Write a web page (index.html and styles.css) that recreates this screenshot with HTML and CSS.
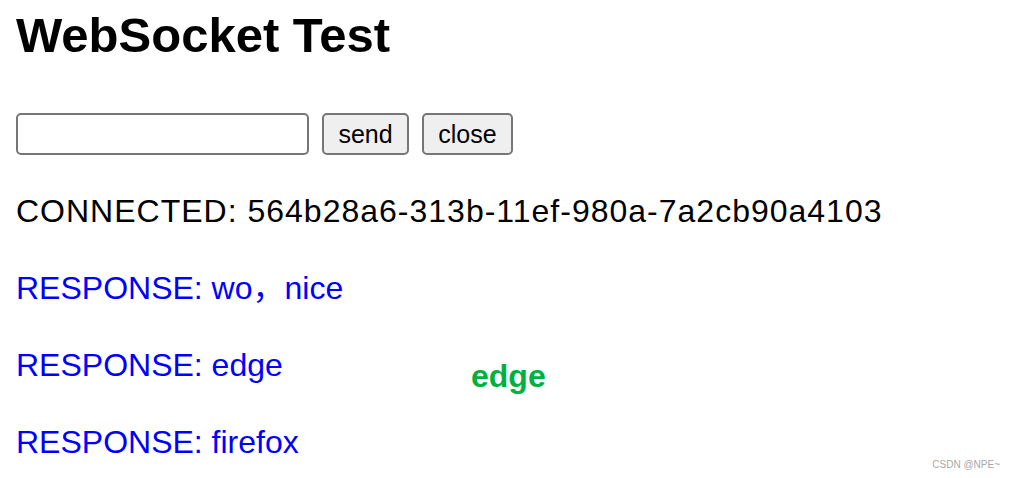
FILE: index.html
```html
<!DOCTYPE html>
<html lang="en">
<head>
<meta charset="utf-8">
<title>WebSocket Test</title>
<link rel="stylesheet" href="styles.css">
</head>
<body>
<div class="page">
  <h1 class="title">WebSocket Test</h1>
  <div class="controls">
    <input class="msg-input" type="text">
    <button class="btn btn-send">send</button>
    <button class="btn btn-close">close</button>
  </div>
  <div class="output">
    <p class="line line-connected">CONNECTED: 564b28a6-313b-11ef-980a-7a2cb90a4103</p>
    <p class="line line-response">RESPONSE: wo，nice</p>
    <p class="line line-response">RESPONSE: edge</p>
    <p class="line line-response">RESPONSE: firefox</p>
  </div>
  <div class="tag-edge">edge</div>
  <div class="watermark">CSDN @NPE~</div>
</div>
</body>
</html>
```

FILE: styles.css
```css
html, body {
  margin: 0;
  padding: 0;
  background: #ffffff;
}

body {
  width: 1010px;
  height: 478px;
  overflow: hidden;
  font-family: "Liberation Sans", Arial, "Noto Sans CJK SC", sans-serif;
  color: #000000;
}

.page {
  position: relative;
  height: 478px;
  box-sizing: border-box;
  padding: 8px 16px 0 16px;
}

.title {
  margin: 0;
  font-size: 49px;
  font-weight: bold;
  line-height: 55px;
}

.controls {
  display: flex;
  align-items: center;
  gap: 13px;
  margin-top: 50px;
  height: 42px;
}

.msg-input {
  box-sizing: border-box;
  width: 293px;
  height: 42px;
  margin: 0;
  border: 2px solid #767676;
  border-radius: 5px;
  background: #ffffff;
  padding: 2px 6px;
  font-family: "Liberation Sans", Arial, sans-serif;
  font-size: 26px;
}

.btn {
  box-sizing: border-box;
  height: 42px;
  margin: 0;
  border: 2px solid #767676;
  border-radius: 5px;
  background: #efefef;
  color: #000000;
  font-family: "Liberation Sans", Arial, sans-serif;
  font-size: 25px;
  padding: 0;
}

.btn-send {
  width: 87px;
}

.btn-close {
  width: 91px;
}

.output {
  margin-top: 34px;
}

.line {
  margin: 0 0 32px 0;
  font-size: 32px;
  line-height: 45px;
  white-space: nowrap;
}

.line-connected {
  color: #000000;
  letter-spacing: 1px;
}

.line-response {
  color: #0000ff;
}

.tag-edge {
  position: absolute;
  left: 471px;
  top: 358px;
  font-size: 32px;
  font-weight: bold;
  line-height: 36px;
  color: #00b140;
}

.watermark {
  position: absolute;
  right: 10px;
  top: 459px;
  font-size: 10px;
  line-height: 12px;
  color: #a8a8a8;
}
```
